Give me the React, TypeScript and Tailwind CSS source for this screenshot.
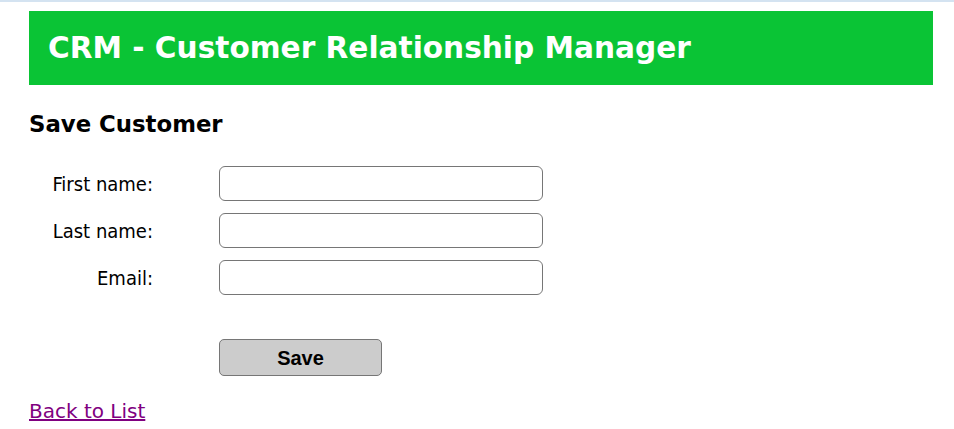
import React from "react";

const rows = ["First name:", "Last name:", "Email:"];

export default function App() {
  return (
    <div className="min-h-[429px] bg-white border-t-2 border-[#d4e3f1] font-['DejaVu_Sans',sans-serif]">
      <div className="pl-[29px] pr-[21px] pt-[9px]">
        <div className="bg-[#0ac435] h-[74px] flex items-center pl-[19px]">
          <h1 className="text-white font-bold text-[29.6px] leading-none pt-[2px]">
            CRM - Customer Relationship Manager
          </h1>
        </div>
        <h2 className="mt-[26px] text-black font-bold text-[22.8px] leading-[26px]">Save Customer</h2>
        <div className="mt-[29px] flex flex-col gap-[12px]">
          {rows.map((r) => (
            <div key={r} className="flex items-center">
              <label className="w-[124px] text-right text-[20px] text-black font-['DejaVu_Sans_Condensed','DejaVu_Sans',sans-serif]">
                {r}
              </label>
              <input
                type="text"
                className="ml-[66px] w-[324px] h-[35px] border border-[#767676] rounded-[6px] bg-white outline-none"
              />
            </div>
          ))}
        </div>
        <div className="mt-[44px] pl-[190px]">
          <button className="w-[163px] h-[37px] bg-[#cccccc] border border-[#767676] rounded-[5px] text-[20px] font-bold text-black font-['Liberation_Sans',Arial,sans-serif]">
            Save
          </button>
        </div>
        <div className="mt-[20px]">
          <a href="#" className="text-[#800080] underline text-[20px] font-['DejaVu_Sans',sans-serif]">
            Back to List
          </a>
        </div>
      </div>
    </div>
  );
}
